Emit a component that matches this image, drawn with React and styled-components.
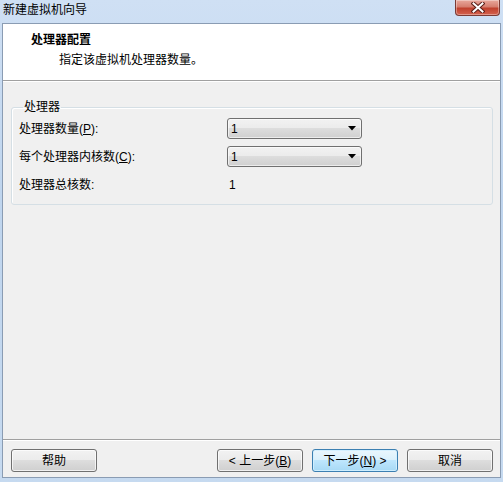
import styled, { createGlobalStyle } from "styled-components";

const GlobalStyle = createGlobalStyle`
    html, body {
        margin: 0;
        padding: 0;
        background: #c4d8ef;
    }
    body {
        font-family: "Liberation Sans", "Noto Sans CJK SC", sans-serif;
        font-size: 12px;
        color: #000;
    }
`;

const Mn = ({ children }) => <u>{children}</u>;

const ComboArrow = () => (
    <svg width="8" height="5" viewBox="0 0 8 5">
        <path d="M0 0 H8 L4 4.5 Z" fill="#000" />
    </svg>
);

const CloseGlyph = () => (
    <svg width="14" height="11" viewBox="0 0 14 11">
        <path d="M2.5 1.5 L11.5 9.5 M11.5 1.5 L2.5 9.5" stroke="#5a1f18" strokeWidth="4" strokeLinecap="square" />
        <path d="M2.5 1.5 L11.5 9.5 M11.5 1.5 L2.5 9.5" stroke="#fff" strokeWidth="2" strokeLinecap="square" />
    </svg>
);

const App = () => {
    return (
        <>
            <GlobalStyle />
            <StWindow>
                <StTitleBar>
                    <StTitle>新建虚拟机向导</StTitle>
                    <StCloseButton>
                        <CloseGlyph />
                    </StCloseButton>
                </StTitleBar>
                <StClient>
                    <StHeader>
                        <StHeaderTitle>处理器配置</StHeaderTitle>
                        <StHeaderSub>指定该虚拟机处理器数量。</StHeaderSub>
                    </StHeader>
                    <StBody>
                        <StGroup>
                            <StLegend>处理器</StLegend>
                            <StGrid>
                                <StLabel>
                                    处理器数量(<Mn>P</Mn>):
                                </StLabel>
                                <StCombo>
                                    <span>1</span>
                                    <ComboArrow />
                                </StCombo>
                                <StLabel>
                                    每个处理器内核数(<Mn>C</Mn>):
                                </StLabel>
                                <StCombo>
                                    <span>1</span>
                                    <ComboArrow />
                                </StCombo>
                                <StLabel>处理器总核数:</StLabel>
                                <StValue>1</StValue>
                            </StGrid>
                        </StGroup>
                    </StBody>
                    <StFooter>
                        <StButton>帮助</StButton>
                        <StNavGroup>
                            <StButton>
                                &lt; 上一步(<Mn>B</Mn>)
                            </StButton>
                            <StButton $primary>
                                下一步(<Mn>N</Mn>) &gt;
                            </StButton>
                            <StButton>取消</StButton>
                        </StNavGroup>
                    </StFooter>
                </StClient>
            </StWindow>
        </>
    );
};

export default App;

const StWindow = styled.div`
    width: 503px;
    height: 482px;
    display: flex;
    flex-direction: column;
    background: linear-gradient(to bottom, #cfe0f4 0%, #bfd5ee 40%, #c6daf0 100%);
`;

const StTitleBar = styled.div`
    height: 23px;
    display: flex;
    justify-content: space-between;
    align-items: flex-start;
    flex-shrink: 0;
`;

const StTitle = styled.div`
    padding: 3px 0 0 3px;
    line-height: 14px;
    color: #000;
`;

const StCloseButton = styled.div`
    width: 45px;
    height: 16px;
    margin-right: 3px;
    box-sizing: border-box;
    border: 1px solid #7a3a34;
    border-top: none;
    border-radius: 0 0 4px 4px;
    background: linear-gradient(to bottom, #e8a89c 0%, #d67e6f 45%, #c0412e 55%, #d4624e 100%);
    box-shadow: inset 0 0 0 1px rgba(255, 255, 255, 0.35);
    display: flex;
    align-items: center;
    justify-content: center;
`;

const StClient = styled.div`
    flex: 1;
    margin: 0 2px 4px 2px;
    border: 1px solid #8a9cb3;
    background: #f0f0f0;
    display: flex;
    flex-direction: column;
`;

const StHeader = styled.div`
    height: 57px;
    box-sizing: border-box;
    background: #fff;
    border-bottom: 1px solid #a0a0a0;
    box-shadow: 0 1px 0 #fff;
    padding: 8px 0 0 28px;
`;

const StHeaderTitle = styled.div`
    font-weight: bold;
    line-height: 16px;
`;

const StHeaderSub = styled.div`
    margin: 4px 0 0 28px;
    line-height: 16px;
`;

const StBody = styled.div`
    flex: 1;
    padding: 19px 7px 0 8px;
`;

const StGroup = styled.fieldset`
    margin: 0;
    padding: 4px 7px 9px 7px;
    border: 1px solid #d5dfe5;
    border-radius: 3px;
    box-shadow: inset 1px 1px 0 #fff;
`;

const StLegend = styled.legend`
    padding: 0 1px;
    margin-left: 4px;
    line-height: 14px;
`;

const StGrid = styled.div`
    display: grid;
    grid-template-columns: 208px 135px;
    grid-auto-rows: 21px;
    row-gap: 7px;
    align-items: center;
`;

const StLabel = styled.div`
    line-height: 14px;
`;

const StValue = styled.div`
    padding-left: 2px;
`;

const StCombo = styled.div`
    height: 21px;
    box-sizing: border-box;
    border: 1px solid #707070;
    border-radius: 3px;
    background: linear-gradient(to bottom, #f2f2f2 0%, #ebebeb 50%, #dddddd 50%, #cfcfcf 100%);
    box-shadow: inset 0 0 0 1px rgba(255, 255, 255, 0.6);
    display: flex;
    align-items: center;
    justify-content: space-between;
    padding: 0 5px 0 3px;
`;

const StFooter = styled.div`
    border-top: 1px solid #a0a0a0;
    box-shadow: inset 0 1px 0 #fff;
    padding: 9px 7px 5px 8px;
    display: flex;
    justify-content: space-between;
`;

const StNavGroup = styled.div`
    display: flex;
    gap: 9px;
`;

const StButton = styled.div`
    width: 86px;
    height: 23px;
    box-sizing: border-box;
    border: 1px solid ${({ $primary }) => ($primary ? "#3c7fb1" : "#707070")};
    border-radius: 3px;
    background: ${({ $primary }) =>
        $primary
            ? "linear-gradient(to bottom, #eaf6fd 0%, #d9f0fc 50%, #bee6fd 50%, #a7d9f5 100%)"
            : "linear-gradient(to bottom, #f2f2f2 0%, #ebebeb 50%, #dddddd 50%, #cfcfcf 100%)"};
    box-shadow: inset 0 0 0 1px ${({ $primary }) => ($primary ? "rgba(210, 240, 255, 0.9)" : "rgba(255, 255, 255, 0.7)")};
    display: flex;
    align-items: center;
    justify-content: center;
    line-height: 14px;
`;
